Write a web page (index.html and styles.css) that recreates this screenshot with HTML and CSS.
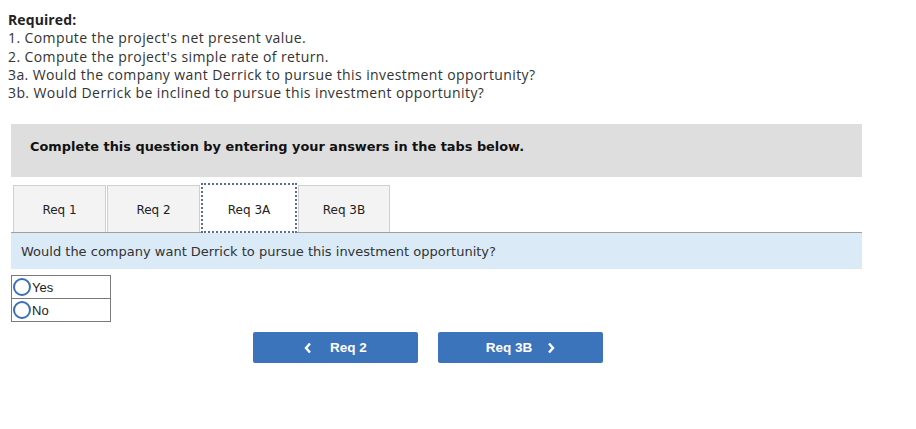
FILE: index.html
```html
<!DOCTYPE html>
<html>
<head>
<meta charset="utf-8">
<link rel="stylesheet" href="styles.css">
</head>
<body>
<div class="required">
  <div class="req-title">Required:</div>
  <div>1. Compute the project's net present value.</div>
  <div>2. Compute the project's simple rate of return.</div>
  <div>3a. Would the company want Derrick to pursue this investment opportunity?</div>
  <div>3b. Would Derrick be inclined to pursue this investment opportunity?</div>
</div>
<div class="instructions">Complete this question by entering your answers in the tabs below.</div>
<div class="tabs">
  <div class="tab t1">Req 1</div>
  <div class="tab t2">Req 2</div>
  <div class="tab active">Req 3A</div>
  <div class="tab t4">Req 3B</div>
</div>
<div class="question">Would the company want Derrick to pursue this investment opportunity?</div>
<div class="choices">
  <div class="choice"><span class="radio"></span>Yes</div>
  <div class="choice"><span class="radio"></span>No</div>
</div>
<div class="nav">
  <div class="btn"><svg class="chev" width="8" height="12" viewBox="0 0 8 12"><polyline points="6,1.5 2,6 6,10.5" fill="none" stroke="#fff" stroke-width="2.4"/></svg><span class="lbl-prev">Req 2</span></div>
  <div class="btn"><span class="lbl-next">Req 3B</span><svg class="chev" width="8" height="12" viewBox="0 0 8 12"><polyline points="2,1.5 6,6 2,10.5" fill="none" stroke="#fff" stroke-width="2.4"/></svg></div>
</div>
</body>
</html>
```
FILE: styles.css
```css
html, body {
  margin: 0;
  padding: 0;
  background: #fff;
}
body {
  font-family: "Open Sans", "Liberation Sans", sans-serif;
  color: #333;
}
.required {
  padding: 11px 0 0 8px;
  font-size: 14px;
  letter-spacing: 0.4px;
  line-height: 18.3px;
  color: #333;
}
.req-title {
  font-weight: bold;
  letter-spacing: 0.1px;
  color: #222;
}
.instructions {
  margin: 22px 0 0 11px;
  width: 851px;
  height: 53px;
  box-sizing: border-box;
  background: #dedede;
  padding: 15px 0 0 19px;
  font-family: "DejaVu Sans", Verdana, sans-serif;
  font-weight: bold;
  font-size: 12.9px;
  color: #111;
}
.tabs {
  display: flex;
  align-items: flex-end;
  margin: 6px 0 0 11px;
  width: 851px;
  padding-left: 2px;
  box-sizing: border-box;
  border-bottom: 1px solid #a0a0a0;
  height: 50px;
}
.tab {
  box-sizing: border-box;
  height: 47px;
  background: #f3f3f3;
  border: 1px solid #cfcfcf;
  border-bottom: none;
  font-family: "DejaVu Sans", Verdana, sans-serif;
  font-size: 12px;
  color: #222;
  display: flex;
  align-items: center;
  justify-content: center;
  padding-top: 2px;
}
.t1 { width: 93px; margin-right: 1px; }
.t2 { width: 93px; margin-right: 1px; }
.t4 { width: 92px; }
.active {
  width: 96px;
  height: 50px;
  margin-bottom: -1px;
  margin-right: 1px;
  background: #fff;
  border: 2px dotted #5a6f93;
  padding-top: 3px;
}
.question {
  margin: 0 0 0 11px;
  width: 851px;
  height: 36px;
  box-sizing: border-box;
  background: #dbeaf7;
  padding: 11px 0 0 10px;
  font-family: "DejaVu Sans", Verdana, sans-serif;
  font-size: 13px;
  color: #333;
}
.choices {
  margin: 6px 0 0 11px;
  width: 100px;
  box-sizing: border-box;
  border: 1px solid #7a7a7a;
}
.choice {
  height: 22px;
  display: flex;
  align-items: center;
  font-family: "Liberation Sans", Arial, sans-serif;
  font-size: 13px;
  color: #222;
  padding-left: 1px;
}
.choice + .choice {
  border-top: 1px solid #7a7a7a;
}
.radio {
  width: 14px;
  height: 14px;
  border: 2px solid #3b6fb5;
  border-radius: 50%;
  margin-right: 1px;
}
.nav {
  display: flex;
  gap: 20px;
  margin: 10px 0 0 253px;
}
.btn {
  width: 165px;
  height: 31px;
  background: #3b74bb;
  border-radius: 2px;
  display: flex;
  align-items: center;
  justify-content: center;
  color: #fff;
  font-family: "Liberation Sans", Arial, sans-serif;
  font-weight: bold;
  font-size: 13.5px;
}
.lbl-prev { margin-left: 18px; }
.lbl-next { margin-right: 15px; }
```
